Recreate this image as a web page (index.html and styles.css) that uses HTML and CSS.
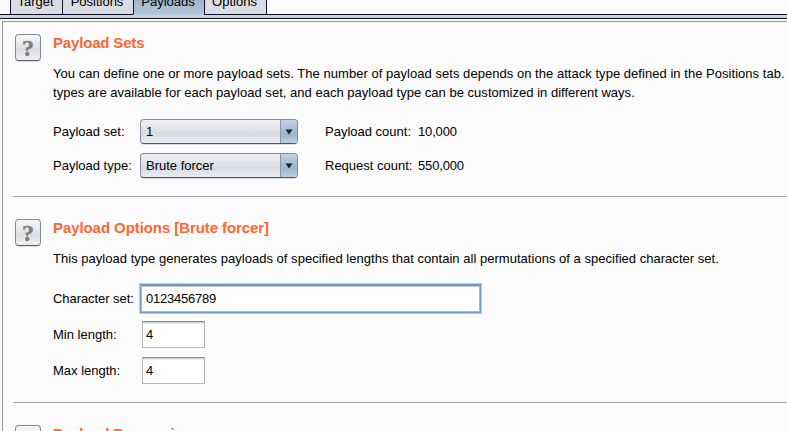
FILE: index.html
```html
<!DOCTYPE html>
<html lang="en">
<head>
<meta charset="utf-8">
<title>Payloads</title>
<link rel="stylesheet" href="styles.css">
</head>
<body>
<nav class="tabs">
  <div class="tab target"><span>Target</span></div>
  <div class="tab positions"><span>Positions</span></div>
  <div class="tab payloads active"><span>Payloads</span></div>
  <div class="tab options"><span>Options</span></div>
</nav>
<div class="band"></div>
<main class="panel">
  <section class="section sets">
    <div class="help">?</div>
    <div class="body">
      <h2><span class="t-sets">Payload Sets</span></h2>
      <p><span class="d1">You can define one or more payload sets. The number of payload sets depends on the attack type defined in the Positions tab.</span><br><span class="d2">types are available for each payload set, and each payload type can be customized in different ways.</span></p>
      <div class="row combo-row"><label>Payload set:</label><div class="combo"><span>1</span><i><svg width="8" height="6" viewBox="0 0 8 6"><path d="M0.5 0.5h7L4 5.5z"/></svg></i></div><span class="count">Payload count:</span><span class="num">10,000</span></div>
      <div class="row combo-row"><label>Payload type:</label><div class="combo"><span>Brute forcer</span><i><svg width="8" height="6" viewBox="0 0 8 6"><path d="M0.5 0.5h7L4 5.5z"/></svg></i></div><span class="count">Request count:</span><span class="num">550,000</span></div>
    </div>
  </section>
  <section class="section opts">
    <div class="help">?</div>
    <div class="body">
      <h2><span class="t-opts">Payload Options [Brute forcer]</span></h2>
      <p><span class="d3">This payload type generates payloads of specified lengths that contain all permutations of a specified character set.</span></p>
      <div class="row field-row"><label class="tight">Character set:</label><div class="field wide"><span>0123456789</span></div></div>
      <div class="row field-row"><label>Min length:</label><div class="field"><span>4</span></div></div>
      <div class="row field-row"><label>Max length:</label><div class="field"><span>4</span></div></div>
    </div>
  </section>
  <section class="section">
    <div class="help">?</div>
    <div class="body"><h2><span class="t-proc">Payload Processing</span></h2></div>
  </section>
</main>
</body>
</html>
```
FILE: styles.css
```css
* { box-sizing: border-box; }
body {
  margin: 0;
  height: 431px;
  overflow: hidden;
  background: #fbfbfb;
  color: #000;
  font: 13px/19px "Liberation Sans", Arial, sans-serif;
}
.tabs { display: flex; height: 15px; padding-left: 10px; }
.tab {
  height: 15px;
  border-left: 1px solid #10102a;
  border-bottom: 1px solid #10102a;
  background: #dcdde3;
  display: flex;
  justify-content: center;
  align-items: flex-end;
  padding: 0 2px 3px 0;
}
.target { width: 52px; }
.positions { width: 71px; }
.payloads { width: 71px; }
.options { width: 63px; border-right: 1px solid #10102a; }
.tab.active {
  position: relative;
  z-index: 1;
  background: linear-gradient(#9fb6ca, #b3c7d9);
  border-bottom-color: #b8cadb;
}
.band {
  height: 5px;
  margin-top: -1px;
  background: #c5d3e2;
  border-top: 1px solid #10102a;
  border-bottom: 1px solid #10102a;
}
.panel {
  margin: 2px 0 0 2px;
  height: 420px;
  border-left: 1px solid #8e939e;
  border-top: 1px solid #8e939e;
  padding-left: 10px;
}
.section { display: flex; padding: 12px 0 0 2px; border-bottom: 1px solid #a0a5b0; }
.sets { height: 175px; }
.opts { height: 206px; padding-top: 22px; }
.section:last-child { padding-top: 22px; border: 0; }
.help {
  flex: none;
  width: 26px;
  height: 27px;
  margin-right: 12px;
  border: 1px solid #858991;
  border-bottom-color: #5b626c;
  border-radius: 4px;
  background: linear-gradient(#f6f7f9, #dcdee3 60%, #eceef2);
  box-shadow: 0 1px 0 #dcdde0;
  color: #808080;
  -webkit-text-stroke: 0.4px #808080;
  font: bold 24px/26px "Liberation Serif", serif;
  text-align: center;
}
.body { flex: 1; min-width: 0; white-space: nowrap; }
h2 {
  margin: 0;
  height: 18px;
  color: #ff6633;
  font-size: 15px;
  line-height: 18px;
}
.t-sets, .t-proc { letter-spacing: -0.17px; }
.t-opts { letter-spacing: -0.08px; }
.d1 { letter-spacing: 0.037px; }
.d2 { letter-spacing: 0.017px; }
.d3 { letter-spacing: 0.027px; }
p { margin: 12px 0 17px; }
.row { display: flex; align-items: center; }
.combo-row { height: 25px; margin-bottom: 9px; }
label { width: 87px; }
.tight { letter-spacing: -0.06px; }
.combo {
  width: 158px;
  height: 25px;
  border: 1px solid #858b98;
  border-bottom-color: #4c5563;
  border-radius: 4px;
  background: linear-gradient(#f1f2f5, #d8dbe1 60%, #e9ecf2);
  box-shadow: 0 1px 0 #dfe0e3;
  display: flex;
  align-items: center;
  padding-left: 5px;
  overflow: hidden;
}
.combo i {
  width: 17px;
  height: 25px;
  margin-left: auto;
  border-left: 1px solid #8298ae;
  background: linear-gradient(#c5d5e3, #9db4c9 60%, #bed2e4);
  display: flex;
  align-items: center;
  justify-content: center;
}
.combo path { fill: #1b1f26; }
.count { width: 93px; margin-left: 27px; }
.num { letter-spacing: -0.15px; }
.field-row { height: 27px; margin-bottom: 9px; }
.field {
  width: 64px;
  height: 27px;
  margin-left: 1px;
  padding-left: 4px;
  border: 1px solid #b6b6b6;
  border-left-width: 1px;
  border-top-color: #8c8c8c;
  background: #fff;
  box-shadow: inset 0 1px 0 #ccc, inset 0 2px 0 #eee;
  display: flex;
  align-items: center;
}
.field:not(.wide) { width: 63px; margin-left: 2px; padding-left: 3px; }
.wide { width: 339px; letter-spacing: -0.22px; outline: 1px solid #6f9fca; box-shadow: 0 0 0 2px #b4d0e8, inset 0 1px 0 #ccc; }
```
